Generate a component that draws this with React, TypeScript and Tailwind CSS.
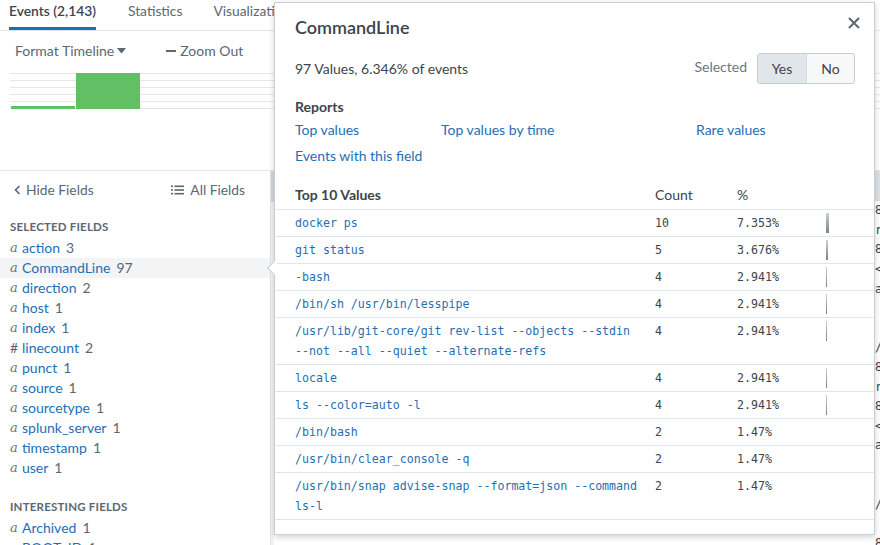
import React from "react";

const fields: [string, string, string][] = [
  ["a", "action", "3"],
  ["a", "CommandLine", "97"],
  ["a", "direction", "2"],
  ["a", "host", "1"],
  ["a", "index", "1"],
  ["#", "linecount", "2"],
  ["a", "punct", "1"],
  ["a", "source", "1"],
  ["a", "sourcetype", "1"],
  ["a", "splunk_server", "1"],
  ["a", "timestamp", "1"],
  ["a", "user", "1"],
];

const rows = [
  { v: ["docker ps"], c: "10", p: "7.353%", w: 3 },
  { v: ["git status"], c: "5", p: "3.676%", w: 2 },
  { v: ["-bash"], c: "4", p: "2.941%", w: 1 },
  { v: ["/bin/sh /usr/bin/lesspipe"], c: "4", p: "2.941%", w: 1 },
  {
    v: ["/usr/lib/git-core/git rev-list --objects --stdin", "--not --all --quiet --alternate-refs"],
    c: "4",
    p: "2.941%",
    w: 1,
  },
  { v: ["locale"], c: "4", p: "2.941%", w: 1 },
  { v: ["ls --color=auto -l"], c: "4", p: "2.941%", w: 1 },
  { v: ["/bin/bash"], c: "2", p: "1.47%", w: 0 },
  { v: ["/usr/bin/clear_console -q"], c: "2", p: "1.47%", w: 0 },
  { v: ["/usr/bin/snap advise-snap --format=json --command", "ls-l"], c: "2", p: "1.47%", w: 0 },
];

const bgChars = ["8", "r", "8", "<", "a", "", "", "/", "8", "r", "8", "<", "a", "", "", "/", "", "8"];

function FieldRow({ t, name, count, hl }: { t: string; name: string; count: string; hl?: boolean }) {
  return (
    <div className={`flex items-center h-[20px] pl-[10px] ${hl ? "bg-[#f2f4f5]" : ""}`}>
      {t === "a" ? (
        <span className="w-[12px] font-['DejaVu_Serif',serif] italic text-[13px] leading-[20px] text-[#6b7785]">a</span>
      ) : (
        <span className="w-[12px] text-[14px] leading-[20px] text-[#5c6773]">#</span>
      )}
      <span className="text-[#1e6fb4] text-[14px] leading-[20px]">{name}</span>
      <span className="ml-[6px] text-[#5c6773] text-[14px] leading-[20px]">{count}</span>
    </div>
  );
}

export default function App() {
  return (
    <div className="relative w-[880px] h-[545px] overflow-hidden bg-white font-['Lato',sans-serif] text-[14px] text-[#3c444d]">
      {/* Tabs */}
      <div className="flex h-[31px] border-b border-[#e1e6eb]">
        <div className="ml-[9px] w-[87px] h-[30px] border-b-[3px] border-[#1a6fb0] flex justify-center pt-[3px] leading-[16px] font-semibold text-[#3c444d] text-[13.8px] whitespace-nowrap">
          Events (2,143)
        </div>
        <div className="ml-[32px] pt-[3px] leading-[16px] text-[#5c6773] text-[13.8px]">Statistics</div>
        <div className="ml-[31px] pt-[3px] leading-[16px] text-[#5c6773] text-[13.8px] whitespace-nowrap">Visualization</div>
      </div>

      {/* Toolbar */}
      <div className="mt-[12px] flex items-center h-[16px] text-[#5c6773] text-[14px] leading-[16px]">
        <div className="ml-[15px] flex items-center">
          Format Timeline
          <svg width="9" height="6" viewBox="0 0 9 6" className="ml-[3px]">
            <path d="M0 0 L9 0 L4.5 5.5 Z" fill="#5c6773" />
          </svg>
        </div>
        <div className="ml-[40px] flex items-center">
          <span className="inline-block w-[10px] h-[1.6px] bg-[#5c6773] mr-[4px]" />
          Zoom Out
        </div>
      </div>

      {/* Timeline chart */}
      <div className="relative mt-[14px] ml-[10px] h-[36px]">
        <div className="flex flex-col border-b border-[#e4e8ec]">
          <div className="h-[7px] border-t border-[#e4e8ec]" />
          <div className="h-[7px] border-t border-[#e4e8ec]" />
          <div className="h-[7px] border-t border-[#e4e8ec]" />
          <div className="h-[7px] border-t border-[#e4e8ec]" />
          <div className="h-[7px] border-t border-[#e4e8ec]" />
        </div>
        <div className="absolute inset-0 flex items-end gap-[1px] pl-[1px]">
          <div className="w-[64px] h-[3px] bg-[#63bf64]" />
          <div className="w-[64px] h-[36px] bg-[#63bf64]" />
        </div>
      </div>

      {/* Main area */}
      <div className="mt-[61px] flex h-[375px] border-t border-[#e1e6eb]">
        <div className="w-[270px] flex flex-col">
          <div className="flex items-center justify-between pt-[11px] pr-[25px] leading-[16px] text-[#5c6773] text-[13.8px]">
            <div className="flex items-center ml-[14px]">
              <svg width="7" height="10" viewBox="0 0 7 10" className="mr-[5px]">
                <path d="M5.5 1 L1.5 5 L5.5 9" fill="none" stroke="#5c6773" strokeWidth="1.6" />
              </svg>
              Hide Fields
            </div>
            <div className="flex items-center">
              <svg width="13" height="10" viewBox="0 0 13 10" className="mr-[6px]">
                <rect x="0" y="0.5" width="2" height="1.6" fill="#5c6773" />
                <rect x="0" y="4.2" width="2" height="1.6" fill="#5c6773" />
                <rect x="0" y="7.9" width="2" height="1.6" fill="#5c6773" />
                <rect x="3.5" y="0.5" width="9.5" height="1.6" fill="#5c6773" />
                <rect x="3.5" y="4.2" width="9.5" height="1.6" fill="#5c6773" />
                <rect x="3.5" y="7.9" width="9.5" height="1.6" fill="#5c6773" />
              </svg>
              All Fields
            </div>
          </div>
          <div className="mt-[22px] pl-[10px] text-[11.5px] leading-[14px] font-bold tracking-[0.2px] text-[#5c6773]">
            SELECTED FIELDS
          </div>
          <div className="mt-[4px] flex flex-col">
            {fields.map(([t, n, c]) => (
              <FieldRow key={n} t={t} name={n} count={c} hl={n === "CommandLine"} />
            ))}
          </div>
          <div className="mt-[22px] pl-[10px] text-[11.5px] leading-[14px] font-bold tracking-[0.2px] text-[#5c6773]">
            INTERESTING FIELDS
          </div>
          <div className="mt-[4px] flex flex-col">
            <FieldRow t="a" name="Archived" count="1" />
            <FieldRow t="a" name="BOOT_ID" count="1" />
          </div>
        </div>
        {/* sidebar scrollbar */}
        <div className="w-[4px] flex flex-col bg-[#f1f3f5] border-l border-[#e1e6eb]">
          <div className="h-[31px] bg-[#d3d8dd]" />
        </div>
        {/* events area (mostly hidden) */}
        <div className="flex-1 flex flex-col items-end">
          <div className="w-full h-[31px] bg-[#dde1e5]" />
          <div className="w-[5px] overflow-hidden flex flex-col font-['DejaVu_Sans_Mono',monospace] text-[12px] leading-[19.6px] text-[#3c444d]">
            {bgChars.map((ch, i) => (
              <div key={i} className="h-[19.6px] whitespace-pre">
                {ch || " "}
              </div>
            ))}
          </div>
        </div>
      </div>

      {/* Popup */}
      <div className="absolute left-[274px] top-[2px] w-[601px] h-[533px] bg-white border border-[#c8cfd6] shadow-[0_2px_6px_rgba(0,0,0,0.18)]">
        <div className="absolute -left-[6px] top-[260px] w-[10px] h-[10px] bg-white border-l border-b border-[#c8cfd6] rotate-45" />
        <button className="absolute right-[14px] top-[14px] w-[12px] h-[12px]">
          <svg width="12" height="12" viewBox="0 0 12 12">
            <path d="M1 1 L11 11 M11 1 L1 11" stroke="#5c6773" strokeWidth="2" />
          </svg>
        </button>

        <div className="pl-[20px] pt-[12px] text-[18px] leading-[24px] font-semibold text-[#3c444d]">CommandLine</div>

        <div className="mt-[14px] pl-[20px] pr-[19px] h-[31px] flex items-center justify-between">
          <div className="text-[14px] text-[#3c444d]">97 Values, 6.346% of events</div>
          <div className="flex items-center">
            <span className="mr-[10px] -mt-[4px] text-[#6b7785] text-[14px]">Selected</span>
            <div className="flex h-[31px] border border-[#c3cbd4] rounded-[3px] overflow-hidden text-[14px] text-[#3c444d]">
              <div className="w-[49px] flex items-center justify-center bg-[#e1e6eb] border-r border-[#d5dbe1]">Yes</div>
              <div className="w-[47px] flex items-center justify-center bg-[#f7f8fa]">No</div>
            </div>
          </div>
        </div>

        <div className="mt-[15px] pl-[20px] font-bold leading-[16px] text-[#3c444d]">Reports</div>
        <div className="mt-[7px] pl-[20px] flex leading-[16px] text-[#1e6fb4]">
          <span className="w-[146px]">Top values</span>
          <span className="w-[255px]">Top values by time</span>
          <span>Rare values</span>
        </div>
        <div className="mt-[10px] pl-[20px] leading-[16px] text-[#1e6fb4]">Events with this field</div>

        <div className="mt-[23px] pl-[20px] pb-[6px] flex leading-[16px] border-b border-[#e1e6eb]">
          <span className="w-[360px] font-bold">Top 10 Values</span>
          <span className="w-[82px]">Count</span>
          <span>%</span>
        </div>
        {rows.map((r, i) => (
          <div key={i} className="pl-[20px] py-[3px] flex border-b border-[#e1e6eb] font-['DejaVu_Sans_Mono',monospace] text-[11.6px] leading-[20px]">
            <div className="w-[360px] text-[#1e6fb4] whitespace-pre">
              {r.v.map((l, j) => (
                <div key={j}>{l}</div>
              ))}
            </div>
            <div className="w-[82px] text-[#3c444d]">{r.c}</div>
            <div className="w-[89px] text-[#3c444d]">{r.p}</div>
            <div className="h-[20px]">
              {r.w > 0 && (
                <div
                  className="h-[20px] bg-gradient-to-b from-[#c9d0d7] to-[#79848f]"
                  style={{ width: `${r.w}px` }}
                />
              )}
            </div>
          </div>
        ))}
      </div>
    </div>
  );
}
